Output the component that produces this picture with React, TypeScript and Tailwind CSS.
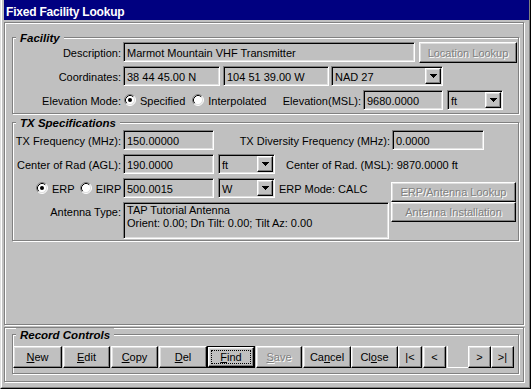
import type { ReactNode } from "react";

// Win95 bevels, shared by every control on the dialog
const raised =
  "border border-t-white border-l-white border-r-black border-b-black shadow-[inset_-1px_-1px_0_#808080,inset_1px_1px_0_#dfdfdf]";
const sunken =
  "border border-t-[#808080] border-l-[#808080] border-r-white border-b-white shadow-[inset_1px_1px_0_#000,inset_-1px_-1px_0_#dfdfdf]";
const etched = "border border-[#808080] shadow-[inset_1px_1px_0_#fff,1px_1px_0_#fff]";

function Field({ className = "", children }: { className?: string; children?: ReactNode }) {
  return (
    <div
      className={`${sunken} h-[20px] shrink-0 bg-[#c0c0c0] pl-[3px] flex items-center whitespace-nowrap overflow-hidden ${className}`}
    >
      <span className="mt-[2px]">{children}</span>
    </div>
  );
}

function Combo({ className = "", value }: { className?: string; value: string }) {
  return (
    <div className={`${sunken} h-[20px] shrink-0 bg-[#c0c0c0] flex items-stretch ${className}`}>
      <span className="flex-1 pl-[3px] flex items-center">
        <span className="mt-[2px]">{value}</span>
      </span>
      <span className={`${raised} w-[16px] m-[1px] flex items-center justify-center`}>
        <svg width="7" height="4" viewBox="0 0 7 4" shapeRendering="crispEdges">
          <path d="M0 0h7v1H0zM1 1h5v1H1zM2 2h3v1H2zM3 3h1v1H3z" fill="#000" />
        </svg>
      </span>
    </div>
  );
}

function Btn({
  className = "",
  children,
  disabled = false,
  isDefault = false,
}: {
  className?: string;
  children: ReactNode;
  disabled?: boolean;
  isDefault?: boolean;
}) {
  const text = disabled ? "text-[#808080] [text-shadow:1px_1px_0_#fff]" : "text-black";
  if (isDefault) {
    return (
      <div className={`border border-black shrink-0 flex ${className}`}>
        <div className={`${raised} flex-1 p-[2px] flex`}>
          <span className={`flex-1 border border-dotted border-black flex items-center justify-center ${text}`}>
            {children}
          </span>
        </div>
      </div>
    );
  }
  return (
    <div className={`${raised} shrink-0 flex items-center justify-center whitespace-nowrap ${text} ${className}`}>
      {children}
    </div>
  );
}

function Radio({ checked = false }: { checked?: boolean }) {
  return (
    <svg width="12" height="12" viewBox="0 0 12 12" className="shrink-0">
      <circle cx="6" cy="6" r="5" fill="#fff" />
      <path d="M2.11 9.89A5.5 5.5 0 0 1 9.89 2.11" fill="none" stroke="#808080" />
      <path d="M9.89 2.11A5.5 5.5 0 0 1 2.11 9.89" fill="none" stroke="#fff" />
      <path d="M2.82 9.18A4.5 4.5 0 0 1 9.18 2.82" fill="none" stroke="#000" />
      <path d="M9.18 2.82A4.5 4.5 0 0 1 2.82 9.18" fill="none" stroke="#dfdfdf" />
      {checked && <circle cx="6" cy="6" r="2" fill="#000" />}
    </svg>
  );
}

function Group({ label, className = "", children }: { label: string; className?: string; children: ReactNode }) {
  return (
    <div className={`relative shrink-0 ${etched} ${className}`}>
      <span className="absolute -top-[7px] left-[3px] px-[4px] bg-[#c0c0c0] font-bold italic text-[11.5px] leading-[14px]">
        {label}
      </span>
      {children}
    </div>
  );
}

function Label({ children, className = "w-[108px]" }: { children: ReactNode; className?: string }) {
  return <span className={`shrink-0 text-right whitespace-nowrap mt-[2px] ${className}`}>{children}</span>;
}

function Row({ children }: { children: ReactNode }) {
  return <div className="flex items-center h-[20px]">{children}</div>;
}

export default function App() {
  return (
    <div className="font-['Liberation_Sans',Arial,sans-serif] text-[11px] leading-[13px] text-black w-[531px] h-[389px] bg-[#c0c0c0] border-l border-r border-b border-l-[#dfdfdf] border-r-black border-b-black">
      <div className="h-full border-l border-r border-b border-l-white border-r-[#808080] border-b-[#808080] pl-[2px] flex flex-col">
        <div className="h-[20px] shrink-0 bg-[#000080] text-white font-bold text-[12px] tracking-[-0.2px] leading-[14px] pt-[5px] pl-[2px]">
          Fixed Facility Lookup
        </div>

        <div className={`${etched} mt-[2px] w-[520px] h-[303px] shrink-0`}>
          <Group label="Facility" className="ml-[7px] mt-[14px] w-[507px] h-[77px] pt-[4px]">
            <div className="flex flex-col gap-[4px]">
              <Row>
                <Label>Description:</Label>
                <Field className="ml-[2px] w-[292px]">Marmot Mountain VHF Transmitter</Field>
                <Btn disabled className="ml-[4px] w-[98px] h-[21px] self-start">
                  <span className="mt-[1px]">Location Lookup</span>
                </Btn>
              </Row>
              <Row>
                <Label>Coordinates:</Label>
                <Field className="ml-[2px] w-[97px]">38 44 45.00 N</Field>
                <Field className="ml-[3px] w-[106px]">104 51 39.00 W</Field>
                <Combo className="ml-[2px] w-[112px]" value="NAD 27" />
              </Row>
              <Row>
                <div className="w-[250px] shrink-0 flex items-center">
                  <Label>Elevation Mode:</Label>
                  <span className="ml-[3px] flex items-center gap-[4px]">
                    <Radio checked />
                    <span className="mt-[2px]">Specified</span>
                  </span>
                  <span className="ml-[7px] flex items-center gap-[4px]">
                    <Radio />
                    <span className="mt-[2px]">Interpolated</span>
                  </span>
                </div>
                <Label className="w-[98px]">Elevation(MSL):</Label>
                <Field className="ml-[2px] w-[80px]">9680.0000</Field>
                <Combo className="ml-[4px] w-[56px]" value="ft" />
              </Row>
            </div>
          </Group>

          <Group label="TX Specifications" className="ml-[7px] mt-[8px] w-[507px] h-[119px] pt-[7px]">
            <div className="flex flex-col gap-[4px]">
              <Row>
                <Label>TX Frequency (MHz):</Label>
                <Field className="ml-[2px] w-[91px]">150.00000</Field>
                <Label className="w-[176px]">TX Diversity Frequency (MHz):</Label>
                <Field className="ml-[2px] w-[92px]">0.0000</Field>
              </Row>
              <Row>
                <Label>Center of Rad (AGL):</Label>
                <Field className="ml-[2px] w-[91px]">190.0000</Field>
                <Combo className="ml-[4px] w-[57px]" value="ft" />
                <span className="ml-[11px] mt-[2px] whitespace-nowrap">Center of Rad. (MSL): 9870.0000 ft</span>
              </Row>
              <div className="flex">
                <div className="w-[376px] shrink-0 flex flex-col gap-[4px]">
                  <Row>
                    <div className="w-[108px] shrink-0 flex items-center pl-[23px]">
                      <Radio checked />
                      <span className="ml-[4px] mt-[2px]">ERP</span>
                      <span className="ml-[5px]">
                        <Radio />
                      </span>
                      <span className="ml-[4px] mt-[2px]">EIRP</span>
                    </div>
                    <Field className="ml-[2px] w-[91px]">500.0015</Field>
                    <Combo className="ml-[4px] w-[57px]" value="W" />
                    <span className="ml-[4px] mt-[2px] whitespace-nowrap">ERP Mode: CALC</span>
                  </Row>
                  <div className="flex items-start">
                    <Label className="w-[108px] !mt-[4px]">Antenna Type:</Label>
                    <div className={`${sunken} ml-[2px] w-[266px] h-[37px] bg-[#c0c0c0] pl-[3px] pt-[1px] whitespace-nowrap`}>
                      <div>TAP Tutorial Antenna</div>
                      <div>Orient: 0.00; Dn Tilt: 0.00; Tilt Az: 0.00</div>
                    </div>
                  </div>
                </div>
                <div className="ml-[2px] mt-[4px] w-[125px] shrink-0 flex flex-col">
                  <Btn disabled className="h-[20px]">
                    <span className="mt-[1px]">ERP/Antenna Lookup</span>
                  </Btn>
                  <Btn disabled className="h-[20px]">
                    <span className="mt-[1px]">Antenna Installation</span>
                  </Btn>
                </div>
              </div>
            </div>
          </Group>
        </div>

        <div className={`${etched} mt-[2px] w-[520px] h-[55px] shrink-0`}>
          <Group label="Record Controls" className="ml-[7px] mt-[6px] w-[507px] h-[40px] pt-[11px]">
            <div className="flex h-[22px]">
              <Btn className="w-[49px]">
                <span><u>N</u>ew</span>
              </Btn>
              <Btn className="ml-[1px] w-[47px]">
                <span><u>E</u>dit</span>
              </Btn>
              <Btn className="ml-[1px] w-[47px]">
                <span><u>C</u>opy</span>
              </Btn>
              <Btn className="ml-[1px] w-[48px]">
                <span><u>D</u>el</span>
              </Btn>
              <Btn isDefault className="w-[48px]">
                <span><u>F</u>ind</span>
              </Btn>
              <Btn disabled className="ml-[1px] w-[46px]">
                <span><u>S</u>ave</span>
              </Btn>
              <Btn className="ml-[1px] w-[48px]">
                <span>Ca<u>n</u>cel</span>
              </Btn>
              <Btn className="w-[47px]">
                <span>Cl<u>o</u>se</span>
              </Btn>
              <Btn className="w-[24px]">|&lt;</Btn>
              <Btn className="ml-[1px] w-[23px]">&lt;</Btn>
              <div className="ml-[1px] w-[21px] shrink-0 border-l border-b border-white" />
              <Btn className="w-[23px]">&gt;</Btn>
              <Btn className="w-[23px]">&gt;|</Btn>
            </div>
          </Group>
        </div>
      </div>
    </div>
  );
}
